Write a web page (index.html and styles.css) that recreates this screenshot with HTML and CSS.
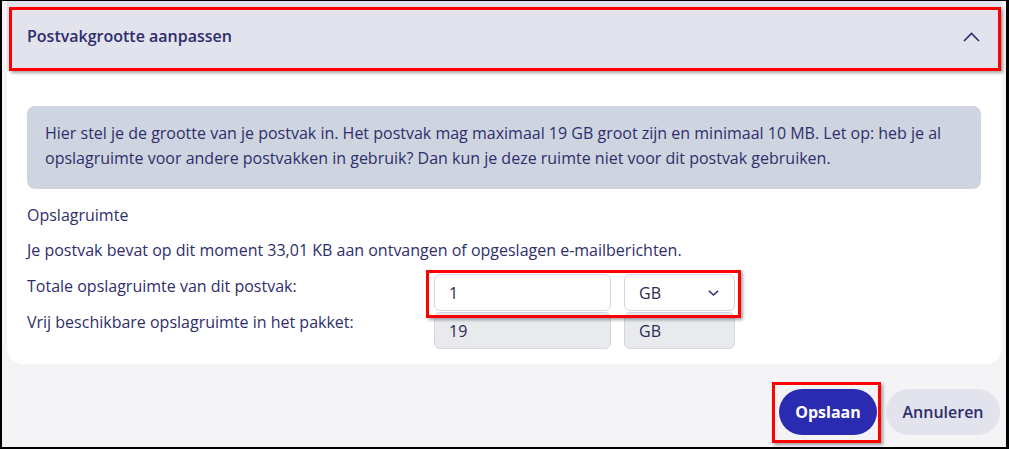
FILE: index.html
```html
<!DOCTYPE html>
<html lang="nl">
<head>
<meta charset="utf-8">
<title>Postvakgrootte aanpassen</title>
<link rel="stylesheet" href="styles.css">
</head>
<body>
<div class="frame">
  <section class="card">
    <header class="card-header">
      <h2 class="card-title">Postvakgrootte aanpassen</h2>
      <svg class="chevron-up" width="17" height="10" viewBox="0 0 17 10"><path d="M1 9 L8.5 1.5 L16 9" fill="none" stroke="#2e2c6d" stroke-width="1.6"/></svg>
    </header>
    <div class="card-body">
      <div class="info">Hier stel je de grootte van je postvak in. Het postvak mag maximaal 19 GB groot zijn en minimaal 10 MB. Let op: heb je al opslagruimte voor andere postvakken in gebruik? Dan kun je deze ruimte niet voor dit postvak gebruiken.</div>
      <p class="line first">Opslagruimte</p>
      <p class="line">Je postvak bevat op dit moment 33,01 KB aan ontvangen of opgeslagen e-mailberichten.</p>
      <div class="form-grid">
        <div class="label">Totale opslagruimte van dit postvak:</div>
        <div class="field">1</div>
        <div class="field select">GB
          <svg class="chevron-down" width="11" height="6" viewBox="0 0 11 6"><path d="M0.8 0.8 L5.5 5 L10.2 0.8" fill="none" stroke="#2e2c6d" stroke-width="1.5"/></svg>
        </div>
        <div class="label second">Vrij beschikbare opslagruimte in het pakket:</div>
        <div class="field disabled">19</div>
        <div class="field disabled">GB</div>
      </div>
    </div>
  </section>
  <div class="actions">
    <button class="btn primary">Opslaan</button>
    <button class="btn secondary">Annuleren</button>
  </div>
  <div class="mark mark-header"></div>
  <div class="mark mark-inputs"></div>
  <div class="mark mark-button"></div>
</div>
</body>
</html>
```

FILE: styles.css
```css
* { box-sizing: border-box; }
html, body { margin: 0; padding: 0; }
body {
  width: 1009px;
  height: 449px;
  overflow: hidden;
  font-family: "Open Sans", "Noto Sans", sans-serif;
  color: #2f2e6b;
  background: #000;
}
.frame {
  position: relative;
  width: 1009px;
  height: 449px;
  border-style: solid;
  border-color: #000;
  border-width: 1px 3px 2px 2px;
  background: #f4f4f7;
  padding: 0 4px 0 5px;
}
.card {
  background: #fff;
  border-radius: 0 0 16px 16px;
}
.card-header {
  height: 70px;
  background: #e2e3ec;
  display: flex;
  align-items: center;
  justify-content: space-between;
  padding: 0 22px 0 20px;
}
.card-title {
  margin: 0;
  font-size: 16px;
  font-weight: 600;
  color: #2e2c6d;
}
.chevron-up { display: block; margin-top: 2px; }
.card-body {
  padding: 35px 21px 15px 20px;
}
.info {
  background: #ced5e1;
  border-radius: 8px;
  padding: 15px 18px 18px;
  font-size: 16px;
  line-height: 25px;
}
.line {
  margin: 10px 0 0;
  font-size: 16px;
  line-height: 25px;
}
.line.first { margin-top: 14px; }
.form-grid {
  margin-top: 11px;
  display: grid;
  grid-template-columns: 394px 177px 111px;
  column-gap: 13px;
  row-gap: 1px;
  font-size: 16px;
}
.label { line-height: 25px; }
.label.second { margin-top: -2px; }
.field {
  height: 37px;
  border: 1px solid #d3d6de;
  border-radius: 6px;
  background: #fff;
  padding: 0 14px;
  display: flex;
  align-items: center;
  font-size: 16px;
  color: #2a2a55;
}
.field.select { justify-content: space-between; padding-right: 15px; }
.chevron-down { display: block; }
.field.disabled { background: #e8eaee; }
.actions {
  display: flex;
  justify-content: flex-end;
  gap: 9px;
  margin-top: 25px;
  padding-right: 2px;
}
.btn {
  height: 46px;
  border: none;
  border-radius: 23px;
  font-family: "Open Sans", "Noto Sans", sans-serif;
  font-size: 16px;
  font-weight: 600;
  padding: 0 16px;
}
.btn.primary {
  background: #2b2bb1;
  color: #fff;
  font-weight: 700;
  width: 98px;
}
.btn.secondary {
  background: #e2e3ec;
  color: #2e2c6d;
  width: 114px;
}
.mark {
  position: absolute;
  border: 3px solid #f00;
  box-shadow: 2px 2px 3px rgba(0, 0, 0, 0.35);
  pointer-events: none;
}
.mark-header { left: 7px; top: 6px; width: 992px; height: 64px; }
.mark-inputs { left: 424px; top: 269px; width: 315px; height: 48px; }
.mark-button { left: 770px; top: 381px; width: 109px; height: 61px; }
```
